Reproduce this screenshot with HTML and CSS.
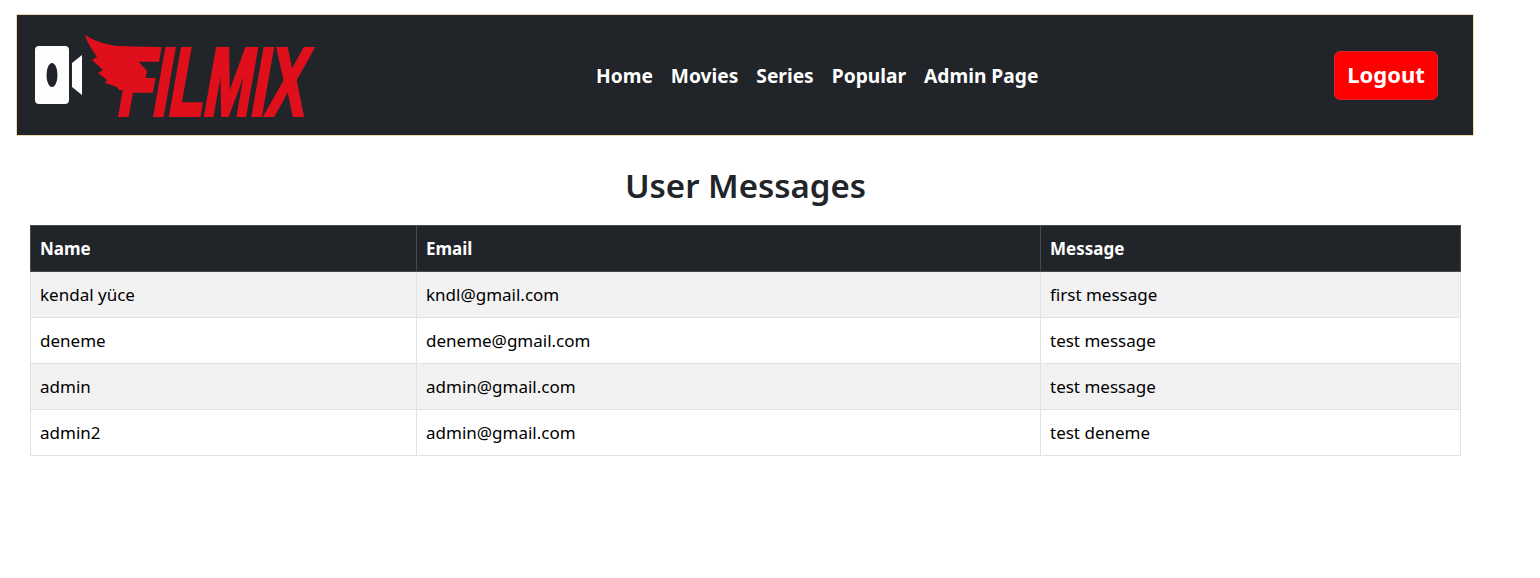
FILE: index.html
```html
<!DOCTYPE html>
<html lang="en">
<head>
<meta charset="utf-8">
<title>User Messages</title>
<link rel="stylesheet" href="styles.css">
</head>
<body>
<div class="page">
  <header class="navbar">
    <a class="brand" href="#" aria-label="Filmix">
      <svg class="logo" viewBox="0 0 290 92" width="290" height="92">
        <rect class="cam" x="1" y="17" width="34" height="58" rx="4"/>
        <ellipse class="lens" cx="18" cy="46" rx="5.5" ry="12"/>
        <polygon class="cam" points="38,34 48,26 48,66 38,58"/>
        <text class="word" x="97" y="86" font-size="96" textLength="187" lengthAdjust="spacingAndGlyphs" transform="skewX(-10)">FILMIX</text>
        <path class="red" d="M51 6 C60 12 70 15 83 17 L120 18 L117 32 L104 32 L113 42 L109 61 L96 61 L85 61 L83 58 L71 54 L73 51 L64 44 L69 41 L58 31 L63 28 C58 21 53 13 51 6 Z"/>
      </svg>
    </a>
    <nav class="links">
      <a href="#">Home</a>
      <a href="#">Movies</a>
      <a href="#">Series</a>
      <a href="#">Popular</a>
      <a href="#">Admin Page</a>
    </nav>
    <button class="logout" type="button">Logout</button>
  </header>
  <main class="content">
    <h1>User Messages</h1>
    <table>
      <colgroup><col class="c1"><col class="c2"><col class="c3"></colgroup>
      <thead>
        <tr><th>Name</th><th>Email</th><th>Message</th></tr>
      </thead>
      <tbody>
        <tr><td>kendal yüce</td><td>kndl@gmail.com</td><td>first message</td></tr>
        <tr><td>deneme</td><td>deneme@gmail.com</td><td>test message</td></tr>
        <tr><td>admin</td><td>admin@gmail.com</td><td>test message</td></tr>
        <tr><td>admin2</td><td>admin@gmail.com</td><td>test deneme</td></tr>
      </tbody>
    </table>
  </main>
</div>
</body>
</html>
```
FILE: styles.css
```css
* { box-sizing: border-box; }
html, body { margin: 0; padding: 0; background: #fff; }
body { font-family: "Noto Sans", "Open Sans", sans-serif; color: #212529; overflow: hidden; }
.page { width: 1458px; margin: 14px 0 0 16px; }
.navbar {
  height: 122px;
  background: #212529;
  border: 1px solid #efd9ae;
  display: flex;
  align-items: center;
  padding: 0 35px 0 17px;
}
.brand { display: block; flex: 0 0 290px; height: 92px; }
.logo { display: block; overflow: visible; }
.cam { fill: #fdfdfd; }
.lens { fill: #212529; }
.red { fill: #e00f1c; }
.word { fill: #e00f1c; font-family: "Liberation Sans", sans-serif; font-weight: 700; stroke: #e00f1c; stroke-width: 4px; }
.links { display: flex; gap: 18px; margin: 2px 0 0 272px; }
.links a { color: #fff; text-decoration: none; font-size: 19.2px; font-weight: 700; line-height: 24px; }
.logout {
  width: 104px; height: 49px;
  margin-left: auto;
  background: #f00;
  color: #fff;
  border: 1px solid #d9252b;
  border-radius: 6px;
  font: 700 22px/1 "Noto Sans", sans-serif;
  padding: 0 0 2px;
}
.content { padding: 0 13px 0 14px; }
h1 { margin: 26px 0 15px; text-align: center; font-size: 33px; font-weight: 600; line-height: 48px; color: #212529; }
table { width: 1431px; border-collapse: collapse; table-layout: fixed; font-size: 17px; color: #000; }
.c1 { width: 386px; }
.c2 { width: 624px; }
th, td { text-align: left; padding: 0 9px; height: 46px; border: 1px solid #dee2e6; }
th { background: #212529; color: #fff; font-weight: 700; border-color: #454a4f; }
tbody tr:nth-child(odd) td { background: #f2f2f2; }
```
